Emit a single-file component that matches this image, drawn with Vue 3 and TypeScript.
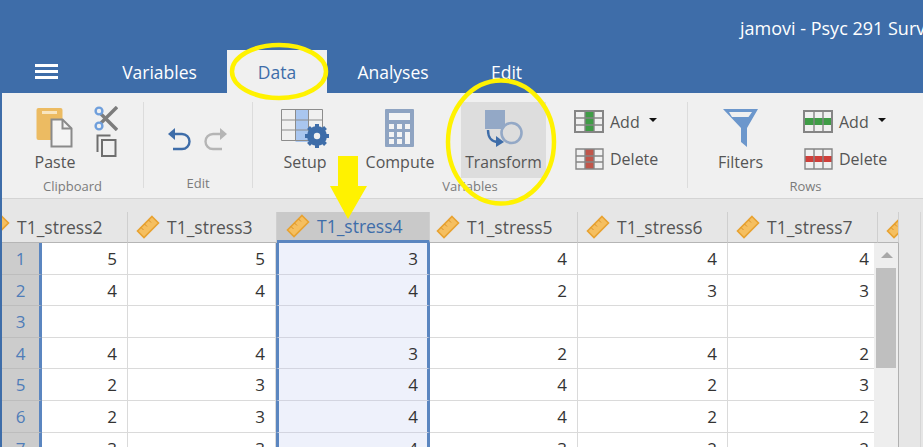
<script setup lang="ts">
const tabs = ['Variables', 'Data', 'Analyses', 'Edit']

interface Column {
  name: string
  selected?: boolean
}

const columns: Column[] = [
  { name: 'T1_stress2' },
  { name: 'T1_stress3' },
  { name: 'T1_stress4', selected: true },
  { name: 'T1_stress5' },
  { name: 'T1_stress6' },
  { name: 'T1_stress7' },
]

const rows: (number | null)[][] = [
  [5, 5, 3, 4, 4, 4],
  [4, 4, 4, 2, 3, 3],
  [null, null, null, null, null, null],
  [4, 4, 3, 2, 4, 2],
  [2, 3, 4, 4, 2, 3],
  [2, 3, 4, 4, 2, 2],
  [3, 3, 4, 3, 2, 2],
]
</script>

<template>
  <div class="app">
    <header class="titlebar">
      <div class="title">jamovi - Psyc 291 Survey</div>
      <nav class="tabs">
        <button class="burger" aria-label="menu"><span></span><span></span><span></span></button>
        <div v-for="tab in tabs" :key="tab" class="tab" :class="{ active: tab === 'Data' }">{{ tab }}</div>
      </nav>
    </header>

    <section class="ribbon">
      <div class="group clipboard">
        <div class="group-body">
          <div class="btn paste">
            <svg width="38" height="40" viewBox="0 0 38 40">
              <rect x="0.5" y="0" width="26" height="32" rx="2" fill="#ecbb62" />
              <rect x="6" y="3" width="15" height="3" fill="#f8e5bf" />
              <path d="M15.5 11.5h11l9 9v18h-20z" fill="#f4f4f4" stroke="#8a8a8a" stroke-width="2" />
              <path d="M26.5 11.5v9h9" fill="none" stroke="#8a8a8a" stroke-width="2" />
            </svg>
            <span>Paste</span>
          </div>
          <div class="mini-stack">
            <svg width="24" height="25" viewBox="0 0 24 25">
              <path d="M7 8 23 24" stroke="#7c7c7c" stroke-width="3.4" />
              <path d="M7 17 23 1" stroke="#7c7c7c" stroke-width="3.4" />
              <circle cx="5" cy="5" r="3.4" fill="none" stroke="#6f9fdc" stroke-width="2.4" />
              <circle cx="5" cy="20" r="3.4" fill="none" stroke="#6f9fdc" stroke-width="2.4" />
            </svg>
            <svg width="21" height="23" viewBox="0 0 21 23">
              <path d="M1.5 18V1.5h13" fill="none" stroke="#6e6e6e" stroke-width="2" />
              <rect x="6" y="6" width="13.5" height="16" fill="none" stroke="#6e6e6e" stroke-width="2" />
            </svg>
          </div>
        </div>
        <div class="group-label">Clipboard</div>
      </div>

      <div class="group edit">
        <div class="group-body">
          <svg width="23" height="24" viewBox="0 0 23 24">
            <path d="M3 7h11a7.5 7.5 0 0 1 0 15H5" fill="none" stroke="#3e6da9" stroke-width="2.4" />
            <path d="M0 7 7 1v12z" fill="#3e6da9" />
          </svg>
          <svg width="23" height="24" viewBox="0 0 23 24">
            <path d="M20 7H9a7.5 7.5 0 0 0 0 15h9" fill="none" stroke="#b5b5b5" stroke-width="2.4" />
            <path d="M23 7 16 1v12z" fill="#b5b5b5" />
          </svg>
        </div>
        <div class="group-label">Edit</div>
      </div>

      <div class="group variables">
        <div class="group-body">
          <div class="btn setup">
            <svg width="48" height="39" viewBox="0 0 48 39">
              <rect x="14.5" y="1" width="13" height="32" fill="#a9c6ef" />
              <path d="M0.5 0.5h41v31h-41zM0.5 11h41M0.5 21h41M14.5 0.5v31M27.5 0.5v31" fill="none" stroke="#8c8c8c" />
              <circle cx="36" cy="27" r="7.5" fill="none" stroke="#3e6da9" stroke-width="5" />
              <path d="M36 15v24M24 27h24M27.5 18.5l17 17M44.5 18.5l-17 17" stroke="#3e6da9" stroke-width="4" />
              <circle cx="36" cy="27" r="3.2" fill="#f0f0f0" />
            </svg>
            <span>Setup</span>
          </div>
          <div class="btn compute">
            <svg width="30" height="38" viewBox="0 0 30 38">
              <rect x="0" y="0" width="29" height="38" rx="1" fill="#8fa4c2" />
              <rect x="4" y="4" width="21" height="7" fill="#f4f4f4" />
              <g fill="#f4f4f4">
                <rect x="4" y="15" width="5" height="5" /><rect x="12" y="15" width="5" height="5" /><rect x="20" y="15" width="5" height="5" />
                <rect x="4" y="23" width="5" height="5" /><rect x="12" y="23" width="5" height="5" /><rect x="20" y="23" width="5" height="12" />
                <rect x="4" y="30" width="5" height="5" /><rect x="12" y="30" width="5" height="5" />
              </g>
            </svg>
            <span>Compute</span>
          </div>
          <div class="btn transform">
            <svg width="38" height="37" viewBox="0 0 38 37">
              <rect x="0" y="0" width="20" height="19" fill="#93a8c6" />
              <circle cx="26.5" cy="23" r="10" fill="#dddddd" stroke="#93a8c6" stroke-width="2.6" />
              <path d="M3 20c0 8 4 12 10 12" fill="none" stroke="#3e6da9" stroke-width="2.4" />
              <path d="M11 26l8 6-8 5z" fill="#3e6da9" />
            </svg>
            <span>Transform</span>
          </div>
          <div class="small-stack">
            <div class="small-btn">
              <svg width="30" height="23" viewBox="0 0 30 23">
                <rect x="11" y="1" width="9" height="21" fill="#3f9c46" />
                <path d="M1 1h28v21H1zM1 8h28M1 15h28M11 1v21M20 1v21" fill="none" stroke="#858585" stroke-width="1.4" />
                <path d="M1 1h28v21H1z" fill="none" stroke="#858585" stroke-width="2" />
              </svg>
              <span>Add</span>
              <i class="caret"></i>
            </div>
            <div class="small-btn">
              <svg width="30" height="22" viewBox="0 0 30 22">
                <rect x="11" y="1" width="9" height="20" fill="#c0554a" />
                <path d="M2 1h27v20H2zM2 8h27M2 14h27M11 1v20M20 1v20" fill="none" stroke="#858585" stroke-width="1.4" />
              </svg>
              <span>Delete</span>
            </div>
          </div>
        </div>
        <div class="group-label">Variables</div>
      </div>

      <div class="group rows">
        <div class="group-body">
          <div class="btn filters">
            <svg width="36" height="38" viewBox="0 0 36 38">
              <path d="M0 0h35L24 19v19l-6-5V19z" fill="#6c97cc" />
              <path d="M6 3h23l-3.500 5H9z" fill="#f0f0f0" />
            </svg>
            <span>Filters</span>
          </div>
          <div class="small-stack">
            <div class="small-btn">
              <svg width="30" height="23" viewBox="0 0 30 23">
                <rect x="1" y="8" width="28" height="7" fill="#3f9c46" />
                <path d="M1 1h28v21H1zM11 1v21M20 1v21" fill="none" stroke="#858585" stroke-width="1.4" />
                <path d="M1 1h28v21H1z" fill="none" stroke="#858585" stroke-width="2" />
              </svg>
              <span>Add</span>
              <i class="caret"></i>
            </div>
            <div class="small-btn">
              <svg width="30" height="22" viewBox="0 0 30 22">
                <rect x="2" y="8" width="27" height="6" fill="#cf3f3a" />
                <path d="M2 1h27v20H2zM11 1v20M20 1v20" fill="none" stroke="#858585" stroke-width="1.4" />
              </svg>
              <span>Delete</span>
            </div>
          </div>
        </div>
        <div class="group-label">Rows</div>
      </div>
    </section>

    <section class="sheet">
      <div class="head">
        <div v-for="col in columns" :key="col.name" class="head-cell" :class="{ selected: col.selected }">
          <svg class="ruler" width="24" height="24" viewBox="0 0 24 24">
            <path d="M16 1.500 22.500 8 8 22.500 1.500 16z" fill="#f5bf60" stroke="#e8a230" stroke-width="1.600" />
            <path d="M5 12.500l2.500 2.500M8.500 9l2.500 2.500M12.500 5l2.500 2.500" stroke="#d9922a" />
          </svg>
          <span>{{ col.name }}</span>
        </div>
        <div class="head-cell">
          <svg class="ruler" width="24" height="24" viewBox="0 0 24 24">
            <path d="M16 1.500 22.500 8 8 22.500 1.500 16z" fill="#f5bf60" stroke="#e8a230" stroke-width="1.600" />
            <path d="M5 12.500l2.500 2.500M8.500 9l2.500 2.500M12.500 5l2.500 2.500" stroke="#d9922a" />
          </svg>
        </div>
      </div>
      <div class="body">
        <div class="grid">
          <template v-for="(row, r) in rows" :key="r">
            <div class="row-num">{{ r + 1 }}</div>
            <div v-for="(val, c) in row" :key="c" class="cell" :class="{ selected: columns[c].selected }">{{ val }}</div>
          </template>
        </div>
        <div class="scrollbar">
          <i class="up"></i>
          <div class="thumb"></div>
        </div>
      </div>
    </section>

    <!-- yellow annotations drawn over the screenshot -->
    <svg class="marks" width="923" height="447" viewBox="0 0 923 447">
      <ellipse cx="279" cy="71.500" rx="47" ry="26.500" fill="none" stroke="#fff200" stroke-width="4.500" />
      <ellipse cx="501" cy="142" rx="53" ry="61.500" fill="none" stroke="#fff200" stroke-width="4.500" />
      <path d="M338 156h20v30h9l-19 33-18-33h8z" fill="#fff200" />
    </svg>
  </div>
</template>

<style>
html,
body {
  margin: 0;
  overflow: hidden;
}
</style>

<style scoped>
.app {
  position: relative;
  width: 923px;
  height: 447px;
  overflow: hidden;
  display: flex;
  flex-direction: column;
  background: #3e6da9;
  font-family: "Open Sans", "Noto Sans", sans-serif;
  color: #555;
}

.titlebar {
  height: 93px;
  flex: none;
  display: flex;
  flex-direction: column;
  justify-content: space-between;
}

.title {
  padding: 17px 0 0 740px;
  font-size: 18px;
  line-height: 22px;
  color: #fff;
  white-space: nowrap;
}

.tabs {
  display: flex;
  height: 43px;
}

.burger {
  width: 92px;
  padding: 0 0 0 35px;
  border: 0;
  background: none;
  display: flex;
  flex-direction: column;
  gap: 3px;
  justify-content: center;
  margin-top: -1px;
}

.burger span {
  width: 23px;
  height: 3px;
  background: #fff;
}

.tab {
  width: 135px;
  text-align: center;
  font-size: 17.5px;
  line-height: 45px;
  color: #fff;
}

.tab.active {
  width: 100px;
  background: #f0f0f0;
  color: #3e6da9;
}

.tab:nth-child(2) {
  width: 135px;
}

.tab:nth-child(4) {
  width: 132px;
}

.tab:nth-child(5) {
  width: 95px;
}

.ribbon {
  flex: none;
  margin-left: 2px;
  background: #f0f0f0;
  border-bottom: 1px solid #d4d4d4;
  display: flex;
  padding-top: 9px;
  height: 96px;
}

.group {
  display: flex;
  flex-direction: column;
  border-right: 1px solid #dcdcdc;
  height: 86px;
  box-sizing: border-box;
}

.group-body {
  display: flex;
  flex: none;
  height: 76px;
}

.group-label {
  font-size: 13px;
  line-height: 16px;
  color: #7b7b7b;
  text-align: center;
}

.edit .group-label {
  margin-top: -3px;
}

.clipboard {
  width: 142px;
}

.edit {
  width: 109px;
}

.variables {
  width: 435px;
}

.rows {
  flex: 1;
  border-right: 0;
}

.btn {
  display: flex;
  flex-direction: column;
  align-items: center;
  font-size: 16px;
  line-height: 20px;
  color: #555;
}

.btn svg {
  margin-bottom: 5px;
}

.paste {
  width: 106px;
  padding-top: 6px;
  box-sizing: border-box;
}

.paste svg {
  margin-bottom: 4px;
}

.mini-stack {
  display: flex;
  flex-direction: column;
  align-items: center;
  gap: 3px;
  width: 26px;
  margin-left: -15px;
  padding-top: 4px;
}

.edit .group-body {
  align-items: flex-start;
  gap: 13px;
  padding: 25px 0 0 24px;
  box-sizing: border-box;
}

.setup {
  width: 104px;
  padding-top: 7px;
}

.setup svg {
  margin-bottom: 4px;
}

.compute {
  width: 86px;
  margin-right: 18px;
  padding-top: 7px;
}

.transform {
  box-sizing: border-box;
  width: 85px;
  height: 76px;
  padding-top: 8px;
  background: #dddddd;
  font-size: 15.700px;
}

.small-stack {
  display: flex;
  flex-direction: column;
  gap: 14px;
  padding: 8px 0 0 28px;
}

.small-btn {
  display: flex;
  align-items: center;
  height: 23px;
  gap: 6px;
  font-size: 16px;
  color: #555;
}

.caret {
  width: 0;
  height: 0;
  margin: -3px 0 0 3px;
  border: 4px solid transparent;
  border-top-color: #111;
  border-bottom: 0;
}

.filters {
  width: 105px;
  padding-top: 7px;
}

.rows .small-stack {
  padding-left: 10px;
}

.sheet {
  position: relative;
  flex: 1;
  min-height: 0;
  margin-left: 2px;
  background: #e6e6e6;
  padding-top: 13px;
  overflow: hidden;
}

.sheet::after {
  content: "";
  position: absolute;
  top: 13px;
  bottom: 0;
  right: 2px;
  width: 1px;
  background: #d6d6d6;
}

.head {
  display: grid;
  grid-template-columns: 126px 149px 153px 148px 150px 150px 21px;
  height: 31px;
}

.head-cell {
  display: flex;
  align-items: center;
  gap: 7px;
  height: 30px;
  border-right: 1px solid #cfcfcf;
  border-bottom: 1px solid #b5b5b5;
  overflow: hidden;
  white-space: nowrap;
  font-size: 17.5px;
  color: #555;
  padding-left: 8px;
}

.head-cell:first-child {
  padding-left: 0;
}

.head-cell:first-child .ruler {
  margin-left: -16px;
}

.head-cell:nth-child(4) {
  padding-left: 6px;
}

.head-cell.selected {
  padding-left: 9px;
  background: #c9c9c9;
  color: #3e6da9;
  border-bottom: 3px solid #5b86c0;
  height: 28px;
}

.ruler {
  flex: none;
}

.body {
  display: flex;
  width: 897px;
}

.grid {
  display: grid;
  grid-template-columns: 40px 86px 148px 154px 148px 150px 146px;
  grid-auto-rows: 31.600px;
  background: #fff;
}

.row-num {
  background: #cccccc;
  border-right: 3px solid #5b86c0;
  border-bottom: 1px solid #bdbdbd;
  text-align: center;
  font-size: 17px;
  line-height: 32px;
  color: #4f7cb8;
}

.cell {
  border-right: 1px solid #dadada;
  border-bottom: 1px solid #dadada;
  text-align: right;
  padding-right: 10px;
  font-size: 17px;
  line-height: 32px;
  color: #333;
}

.cell:nth-child(7n) {
  padding-right: 5px;
  border-right: 0;
}

.cell.selected {
  background: #eef1fb;
  border-left: 3px solid #5b86c0;
  border-right: 3px solid #5b86c0;
  border-bottom-color: #d3d5e0;
  padding-right: 9px;
}

.scrollbar {
  position: relative;
  flex: 1;
  background: #eeeeee;
  border-right: 1px solid #b0b0b0;
  padding: 25px 2px 0;
}

.up {
  position: absolute;
  top: 9px;
  left: 7px;
  border: 6px solid transparent;
  border-bottom-color: #a8a8a8;
  border-top: 0;
}

.thumb {
  height: 100px;
  background: #bfbfbf;
}

.marks {
  position: absolute;
  inset: 0;
  pointer-events: none;
}
</style>
